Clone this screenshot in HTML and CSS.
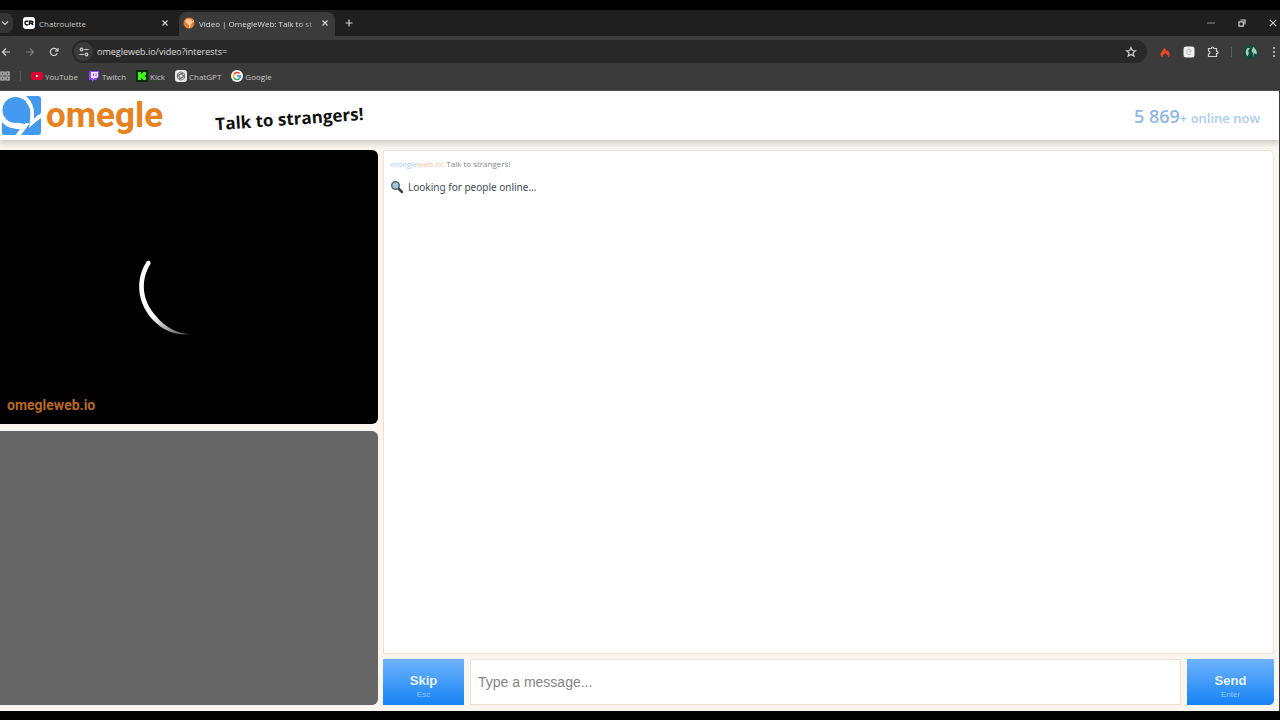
FILE: index.html
```html
<!DOCTYPE html>
<html lang="en">
<head>
    <meta charset="UTF-8">
    <meta name="viewport" content="width=device-width, initial-scale=1.0">
    <title>Video | OmegleWeb: Talk to strangers</title>
    <link rel="stylesheet" href="styles.css">
</head>
<body>
    <div class="browser">
        <div class="tabs">
            <button class="tab-search" aria-label="Search tabs">
                <svg width="8" height="8" viewBox="0 0 8 8" class="line"><path d="M1 2.5l3 3 3-3"/></svg>
            </button>
            <div class="tab">
                <svg width="12" height="12" viewBox="0 0 12 12"><rect width="12" height="12" rx="3" fill="#fff"/><path d="M5.3 4.3H3.2Q2 4.3 2 6t1.200 1.700h2.100M6.500 8V4.300h2.200q1.200 0 1.200 1t-1.200 1H6.500m2 0L10 8" fill="none" stroke="#111" stroke-width="1.400"/></svg>
                <span class="tab-title">Chatroulette</span>
                <button class="close" aria-label="Close tab"><svg width="8" height="8" viewBox="0 0 8 8" class="line"><path d="M1.500 1.500l5 5m0-5l-5 5"/></svg></button>
            </div>
            <div class="tab active">
                <svg width="12" height="12" viewBox="0 0 12 12"><circle cx="6" cy="6" r="5.500" fill="#f07a22"/><path d="M2.500 3.500C3.500 1 8.500.8 9.300 4.200c.5 2.200-1 3.800-3.200 3.800L4 6.500C2.800 6 2.200 5 2.500 3.500z" fill="#ffc59a"/><path d="M9.500 4.500L11 4M6 8l1.500.5L6 11" stroke="#fff" fill="none"/></svg>
                <span class="tab-title">Video | OmegleWeb: Talk to st</span>
                <button class="close" aria-label="Close tab"><svg width="8" height="8" viewBox="0 0 8 8" class="line"><path d="M1.500 1.500l5 5m0-5l-5 5"/></svg></button>
            </div>
            <button class="new-tab" aria-label="New tab"><svg width="8" height="8" viewBox="0 0 8 8" class="line"><path d="M4 .5v7M.5 4h7"/></svg></button>
            <div class="window-buttons">
                <button aria-label="Minimize"><svg width="8" height="8" viewBox="0 0 8 8" class="line dim"><path d="M0 4h8"/></svg></button>
                <button aria-label="Restore"><svg width="8" height="8" viewBox="0 0 8 8" class="line"><path d="M2.500 1h4.500v4.500M1 2.800h4.300v4.300H1z"/></svg></button>
                <button aria-label="Close"><svg width="8" height="8" viewBox="0 0 8 8" class="line"><path d="M.8.8l6.400 6.400m0-6.400L.8 7.200"/></svg></button>
            </div>
        </div>

        <div class="toolbar">
            <div class="nav">
                <button aria-label="Back"><svg width="10" height="10" viewBox="0 0 10 10" class="line"><path d="M9 5H1.500M5 1.500L1.500 5 5 8.500"/></svg></button>
                <button aria-label="Forward"><svg width="10" height="10" viewBox="0 0 10 10" class="line dim"><path d="M1 5h7.500M5 1.500L8.500 5 5 8.500"/></svg></button>
                <button aria-label="Reload"><svg width="10" height="10" viewBox="0 0 10 10" class="line"><path d="M8.300 6.300A3.600 3.600 0 1 1 7.900 2.800L9 4M9 1v3H6"/></svg></button>
            </div>
            <div class="address">
                <span class="site-info"><svg width="10" height="10" viewBox="0 0 10 10" class="line"><circle cx="2.500" cy="2.500" r="1.300"/><path d="M5 2.500h4.500M.5 7.500H5"/><circle cx="7.500" cy="7.500" r="1.300"/></svg></span>
                <input type="text" class="url" aria-label="Address" value="omegleweb.io/video?interests=">
                <button aria-label="Bookmark"><svg width="12" height="12" viewBox="0 0 12 12" class="line"><path d="M6 1.500l1.300 3 3.200.3-2.400 2.100.7 3.200L6 8.400l-2.800 1.700.7-3.200-2.400-2.100 3.200-.3z"/></svg></button>
            </div>
            <div class="extensions">
                <button aria-label="Flame extension"><svg width="12" height="12" viewBox="0 0 12 12"><path d="M5 1.500C6 3 7.500 4 7.800 5.200l1-.7c1.500 1.500 2.200 3.500 1.700 5.500L9 11c0-1.800-1.300-2.800-2.800-4C5.500 8.500 3.500 9 3.500 11L2 10.300C0 7 4.500 5 5 1.500z" fill="#e5471e"/></svg></button>
                <button aria-label="Extension"><svg width="12" height="12" viewBox="0 0 12 12"><rect x=".5" y=".5" width="11" height="11" rx="2.500" fill="#eee"/><path d="M4 8V5.500A2 2 0 0 1 8 5v1H5.500M4.500 8.500H8" fill="none" stroke="#bbb"/></svg></button>
                <button aria-label="Extensions"><svg width="12" height="12" viewBox="0 0 12 12" class="line"><path d="M1.500 2.500h2.800C4.300.5 6.800.5 6.800 2.500h2.700v2.700c2 0 2 2.500 0 2.500v2.800h-8V8c2 0 2-3 0-3z"/></svg></button>
                <span class="divider"></span>
                <button aria-label="Profile"><svg width="14" height="14" viewBox="0 0 14 14"><circle cx="7" cy="7" r="7" fill="#124b3d"/><path d="M3.500 3C1 5.500 1.500 9 3.500 11.500L5 8 4 6l2-3zM9 2l-1.500 4L9 8v4.500L10 8l2.500 1.500C13.500 7 12 4 9 2z" fill="#a5d3bd"/></svg></button>
                <button aria-label="Menu"><svg width="4" height="12" viewBox="0 0 4 12" fill="#d0d0d0"><circle cx="2" cy="2" r="1"/><circle cx="2" cy="6" r="1"/><circle cx="2" cy="10" r="1"/></svg></button>
            </div>
        </div>

        <nav class="bookmarks">
            <button aria-label="Apps"><svg width="10" height="10" viewBox="0 0 10 10" class="line"><path d="M1 1h3v3H1zM6 1h3v3H6zM1 6h3v3H1zM6 6h3v3H6z"/></svg></button>
            <span class="divider"></span>
            <a href="#"><svg width="12" height="12" viewBox="0 0 12 12"><rect y="2" width="12" height="8" rx="2" fill="#d9042f"/><path d="M5 4.500v3L7.500 6z" fill="#fff"/></svg>YouTube</a>
            <a href="#"><svg width="12" height="12" viewBox="0 0 12 12"><path d="M1.500 1L1 3v7h3v2l2-2h2l3-3V1z" fill="#9146ff"/><path d="M3 2h7v4.500L8.500 8H6.500L5 9.500V8H3z" fill="#eee3ff"/><path d="M5.500 3.500v2.500M8 3.500v2.500" stroke="#9146ff"/></svg>Twitch</a>
            <a href="#"><svg width="12" height="12" viewBox="0 0 12 12"><rect width="12" height="12" fill="#082c06"/><path d="M2 2h3v2h1V3h1V2h3v3H9v2h1v3H7V9H6V8H5v2H2z" fill="#3df51b"/></svg>Kick</a>
            <a href="#"><svg width="12" height="12" viewBox="0 0 12 12"><rect width="12" height="12" rx="3" fill="#e8e8e8"/><g fill="none" stroke="#555" stroke-width=".8"><path d="M6 1.800l3.600 2.100v4.200L6 10.200 2.400 8.100V3.900zM6 3.800l2 1.100v2.200L6 8.200 4 7.100V4.900zM4 4.900l4-2M8 7.100L4 9.200M4 7.100L2.500 4M8 4.900L9.500 8"/></g></svg>ChatGPT</a>
            <a href="#"><svg width="12" height="12" viewBox="0 0 12 12"><circle cx="6" cy="6" r="6" fill="#fff"/><g fill="none" stroke-width="1.600"><path d="M3 4.200A3.500 3.500 0 0 1 8.500 3.500" stroke="#ea4335"/><path d="M3 4.200a3.500 3.500 0 0 0 0 3.600" stroke="#fbbc05"/><path d="M3 7.800a3.500 3.500 0 0 0 5.500.7" stroke="#34a853"/><path d="M8.500 8.500A3.500 3.500 0 0 0 9.500 6H6" stroke="#4285f4"/></g></svg>Google</a>
        </nav>

        <div class="page">
            <header class="header">
                <a href="#" class="logo">
                    <svg width="40" height="40" viewBox="0 0 40 40" fill="#439af0">
                        <path d="M25 0H37q3 0 3 3v14l-7 7C33.500 15 33 7 25 0z"/>
                        <path d="M1 26C5 31 11 33 19 33L14.500 39H3q-2 0-2-2z"/>
                        <path d="M40 22v14q0 3-3 3H20l8-11.500-3-1 3.500-3.500 2.500 6z"/>
                        <circle cx="14.500" cy="14" r="13"/>
                        <path d="M22 3C30 9 30.500 16 28.500 26L23 28 15 26z"/>
                        <path d="M26 5C32.500 12 31.500 19 30 28L38.500 19.500" fill="none" stroke="#fff" stroke-width="3"/>
                        <path d="M2 24C8 30 15 30.500 25 29.500L18 39" fill="none" stroke="#fff" stroke-width="3"/>
                    </svg>
                    <span class="logo-text">omegle</span>
                </a>
                <span class="slogan">Talk to strangers!</span>
                <span class="online"><b>5 869</b>+ online now</span>
            </header>

            <main class="main">
                <section class="videos">
                    <div class="video stranger">
                        <svg class="spinner" width="80" height="80" viewBox="0 0 80 80">
                            <defs>
                                <linearGradient id="fade" x1="0" y1="0" x2="1" y2="1">
                                    <stop offset="0.500" stop-color="#fff"/>
                                    <stop offset="1" stop-color="#fff" stop-opacity="0.200"/>
                                </linearGradient>
                            </defs>
                            <path d="M9 10C-3 28-1 51 14 68C25 80 38 85 54 83C39 83 27 76 18 65C4 50 2 29 12.500 13Q13 9 9 10Z" fill="url(#fade)"/>
                        </svg>
                        <span class="watermark">omegleweb.io</span>
                    </div>
                    <div class="video self"></div>
                </section>

                <section class="chat">
                    <div class="messages">
                        <p class="intro"><span class="blue">omegle</span><span class="orange">web.io:</span> Talk to strangers!</p>
                        <p class="status">
                            <svg width="14" height="14" viewBox="0 0 14 14"><path d="M8 8l4 4" stroke="#3b4147" stroke-width="2.500" stroke-linecap="round"/><circle cx="5.500" cy="5.500" r="3.800" fill="#9fc8dd" stroke="#56656f" stroke-width="1.500"/></svg>
                            Looking for people online...
                        </p>
                    </div>
                    <form class="controls">
                        <button type="button" class="action skip">Skip<small>Esc</small></button>
                        <input type="text" class="message" aria-label="Message" placeholder="Type a message...">
                        <button type="button" class="action send">Send<small>Enter</small></button>
                    </form>
                </section>
            </main>
        </div>
    </div>
</body>
</html>
```

FILE: styles.css
```css
* {
    box-sizing: border-box;
}
body {
    margin: 0;
    height: 100vh;
    padding: 10px 0 9px;
    background: #000;
    font-family: "Noto Sans", sans-serif;
    overflow: hidden;
}
button {
    display: flex;
    align-items: center;
    justify-content: center;
    padding: 0;
    border: none;
    background: none;
    cursor: pointer;
}
svg {
    flex: none;
}
.line {
    fill: none;
    stroke: #d0d0d0;
    stroke-width: 1.2;
}
.dim {
    stroke: #7c7c7c;
}
.browser {
    display: flex;
    flex-direction: column;
    height: 100%;
    background: #3b3b3b;
    color: #c8c8c8;
    font-family: "Open Sans", sans-serif;
    font-size: 8px;
}

/* Tabs */
.tabs {
    display: flex;
    align-items: center;
    height: 26px;
    background: #1f1f1f;
}
.tab-search {
    width: 13px;
    height: 20px;
    padding-right: 4px;
    border-radius: 0 7px 7px 0;
    background: #353535;
}
.tab {
    display: flex;
    align-items: center;
    gap: 4px;
    width: 156px;
    height: 24px;
    margin: 0 4px 0 6px;
    padding: 0 5px 2px 4px;
    align-self: flex-end;
}
.tab.active {
    margin: 0;
    border-radius: 8px 8px 0 0;
    background: #3b3b3b;
    color: #dedede;
}
.tab-title {
    flex: 1;
    white-space: nowrap;
}
.active .tab-title {
    mask-image: linear-gradient(90deg, #000 85%, rgba(0, 0, 0, 0.3));
}
.close {
    width: 10px;
    height: 10px;
}
.new-tab {
    width: 28px;
    height: 20px;
}
.window-buttons {
    display: flex;
    gap: 23px;
    margin-left: auto;
    padding-right: 3px;
}

/* Toolbar */
.toolbar {
    display: flex;
    align-items: center;
    height: 31px;
}
.nav {
    display: flex;
    gap: 14px;
    padding: 0 13px 0 1px;
}
.address {
    display: flex;
    flex: 1;
    align-items: center;
    height: 23px;
    padding: 0 10px 0 2px;
    border-radius: 12px;
    background: #282828;
}
.site-info {
    display: flex;
    align-items: center;
    justify-content: center;
    width: 19px;
    height: 19px;
    border-radius: 50%;
    background: #3b3b3b;
}
.url {
    flex: 1;
    padding: 0 4px;
    border: none;
    outline: none;
    background: none;
    color: #dedede;
    font-family: inherit;
    font-size: 9px;
}
.extensions {
    display: flex;
    align-items: center;
    gap: 12px;
    padding: 0 4px 0 12px;
}
.extensions button:last-child {
    padding-left: 2px;
}
.divider {
    width: 1px;
    height: 10px;
    background: #5c5c5c;
}

/* Bookmarks */
.bookmarks {
    display: flex;
    align-items: center;
    gap: 10px;
    height: 24px;
    padding-bottom: 5px;
    border-bottom: 1px solid #505050;
}
.bookmarks a {
    display: flex;
    align-items: center;
    gap: 2px;
    color: inherit;
    text-decoration: none;
}

/* Page */
.page {
    display: flex;
    flex: 1;
    flex-direction: column;
    min-height: 0;
    margin-right: 1px;
    background: #faf5ee;
}
.header {
    display: flex;
    align-items: center;
    height: 49px;
    padding: 0 19px 0 1px;
    background: #fff;
    box-shadow: 0 3px 6px rgba(60, 60, 50, 0.25);
}
.logo {
    display: flex;
    align-items: center;
    gap: 5px;
    width: 214px;
    text-decoration: none;
}
.logo-text {
    color: #e8821e;
    font-family: Roboto, sans-serif;
    font-size: 35px;
    font-weight: bold;
    line-height: 40px;
}
.slogan {
    color: #111;
    font-size: 17px;
    font-weight: bold;
    padding-top: 6px;
    transform: rotate(-4deg);
}
.online {
    margin-left: auto;
    color: #a9cdef;
    font-size: 13px;
    font-weight: 600;
}
.online b {
    color: #8fb8e6;
    font-size: 18px;
    font-weight: 600;
}
.main {
    display: flex;
    flex: 1;
    gap: 5px;
    min-height: 0;
    padding: 10px 5px 6px 0;
}
.videos {
    display: grid;
    grid-template-rows: 1fr 1fr;
    gap: 7px;
    width: 378px;
}
.video {
    display: flex;
    border-radius: 0 6px 6px 0;
}
.stranger {
    position: relative;
    align-items: center;
    justify-content: center;
    background: #000;
}
.spinner {
    overflow: visible;
    margin-top: 8px;
    margin-right: 22px;
}
.self {
    background: #666;
}
.watermark {
    position: absolute;
    left: 7px;
    bottom: 11px;
    color: #b8681f;
    font-family: Roboto, sans-serif;
    font-size: 14px;
    font-weight: bold;
}
.chat {
    display: flex;
    flex: 1;
    flex-direction: column;
    gap: 5px;
    min-width: 0;
}
.messages {
    flex: 1;
    padding: 6px;
    border: 1px solid #f0e2d2;
    border-radius: 0 5px 0 0;
    background: #fff;
    color: #414c55;
    font-family: "Open Sans", sans-serif;
}
.messages p {
    margin: 0 0 8px;
}
.intro {
    color: #888;
    font-size: 8px;
    line-height: 14px;
}
.blue {
    color: #a5d3f6;
}
.orange {
    color: #fac49a;
}
.status {
    display: flex;
    align-items: center;
    gap: 4px;
    font-family: "Noto Sans", sans-serif;
    font-size: 10px;
    line-height: 16px;
}
.controls {
    display: flex;
    gap: 6px;
    height: 46px;
    margin: 0;
}
.action {
    flex-direction: column;
    width: 81px;
    padding-top: 8px;
    background: linear-gradient(#6fb3fb, #1583f5);
    color: #e6f3ff;
    font-family: "Liberation Sans", sans-serif;
    font-size: 13px;
    font-weight: bold;
    line-height: 18px;
}
.action small {
    color: #8cc5ff;
    font-size: 8px;
    font-weight: normal;
    line-height: 10px;
}
.send {
    width: 87px;
    border-radius: 0 0 5px 0;
}
.message {
    flex: 1;
    min-width: 0;
    padding: 0 7px;
    border: 1px solid #f0e2d2;
    outline: none;
    background: #fff;
    color: #444;
    font-family: "Liberation Sans", sans-serif;
    font-size: 14px;
}
.message::placeholder {
    color: #858585;
}
```
